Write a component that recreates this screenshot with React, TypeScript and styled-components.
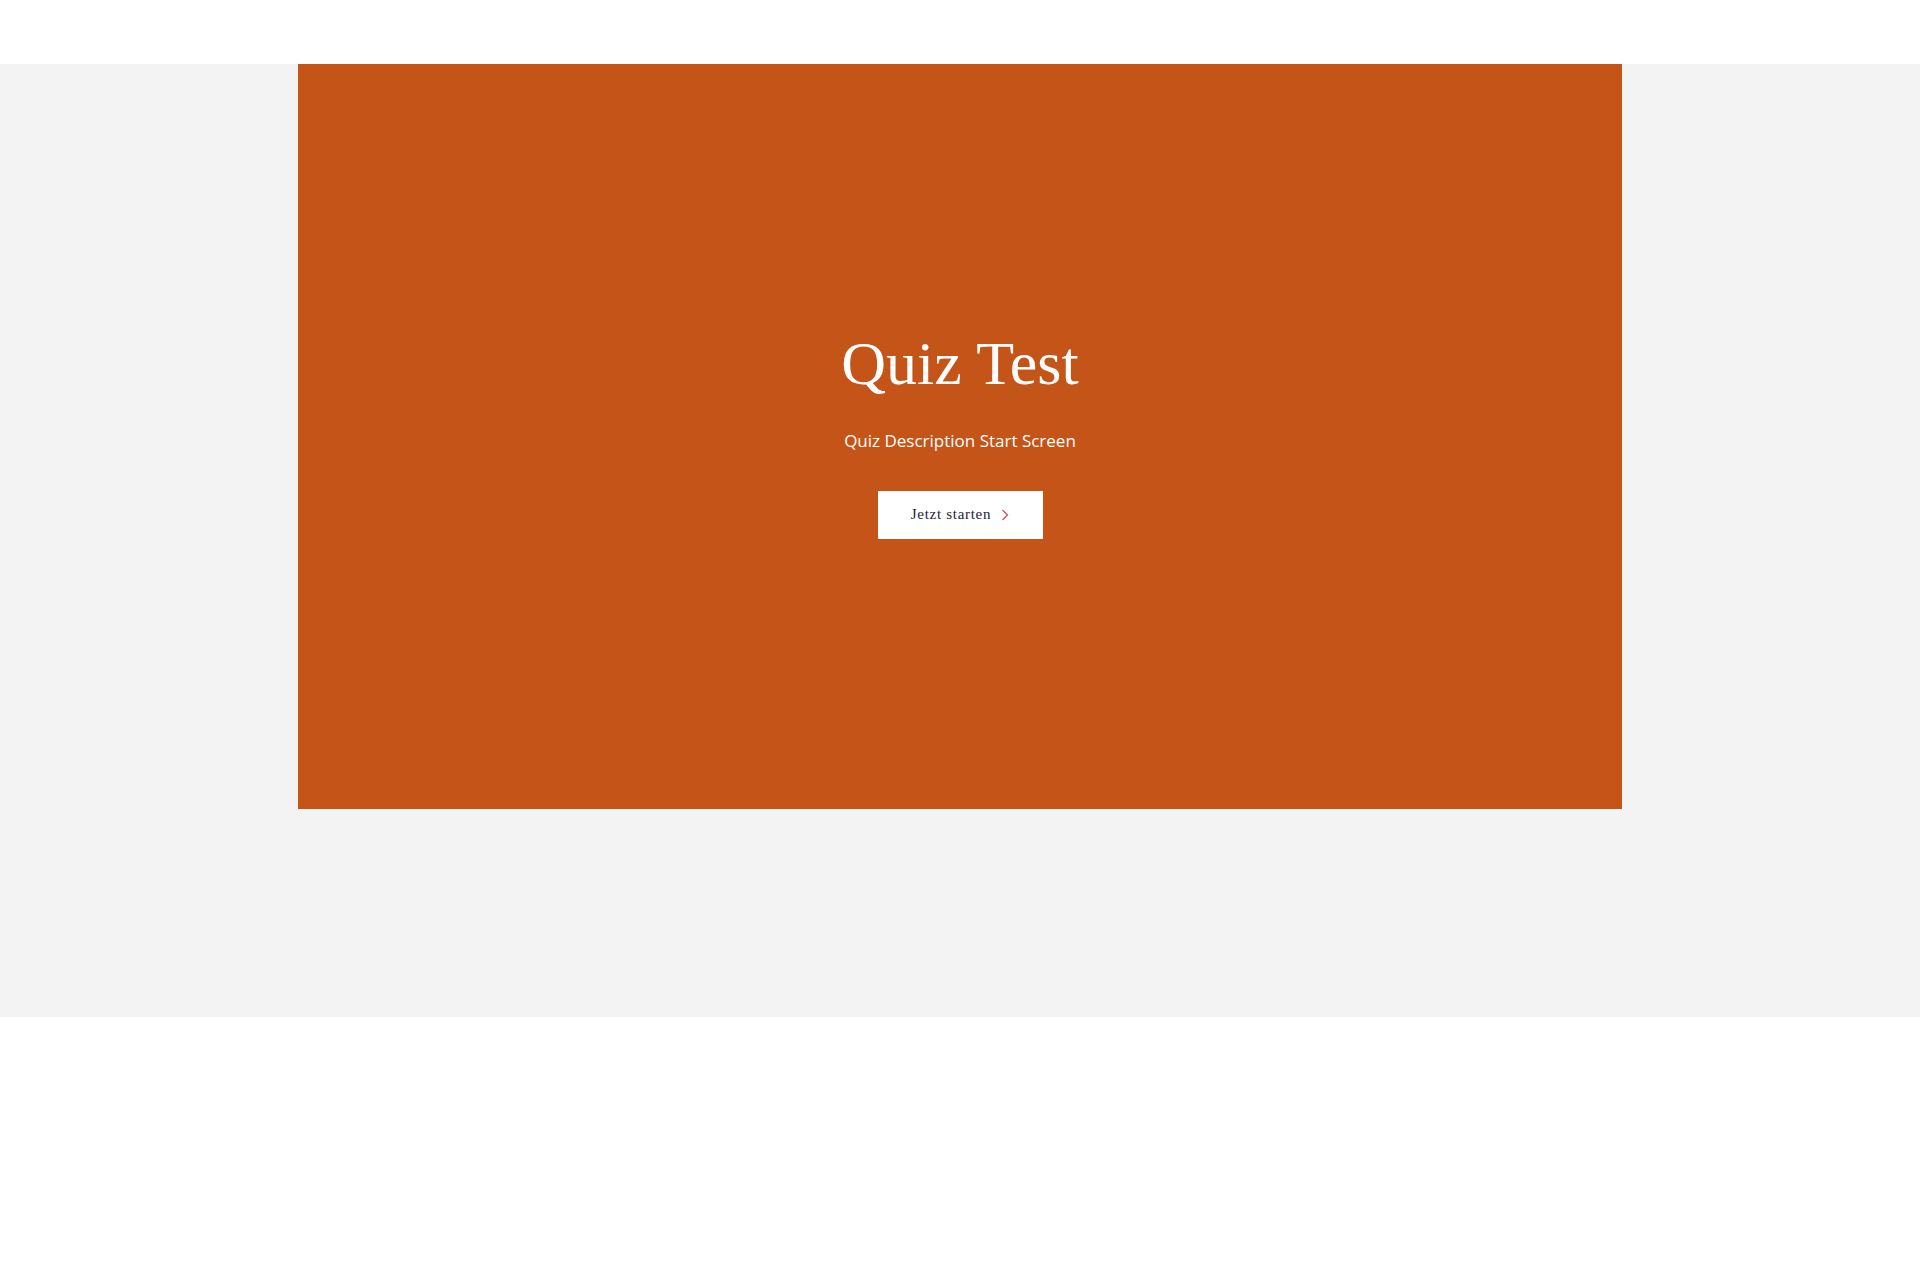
import React from "react";
import styled, { createGlobalStyle } from "styled-components";

const Global = createGlobalStyle`
  html, body { margin: 0; padding: 0; background: #ffffff; }
  body { font-family: "Open Sans", "Liberation Sans", sans-serif; }
`;

const Page = styled.div`
  padding-top: 64px;
  min-height: 1280px;
  box-sizing: border-box;
`;

const Band = styled.section`
  background: #f3f3f3;
  height: 953px;
  display: flex;
  justify-content: center;
  align-items: flex-start;
`;

const Stage = styled.div`
  width: 1324px;
  height: 745px;
  box-sizing: border-box;
  padding-bottom: 8px;
  background: #c45418;
  display: flex;
  flex-direction: column;
  align-items: center;
  justify-content: center;
  color: #ffffff;
`;

const Title = styled.h1`
  margin: 0;
  font-family: "Liberation Serif", "DejaVu Serif", serif;
  font-weight: 400;
  font-size: 62px;
  line-height: 72px;
`;

const Description = styled.p`
  margin: 30px 0 0;
  font-family: "Open Sans", "Noto Sans", sans-serif;
  font-size: 17px;
  line-height: 24px;
`;

const StartButton = styled.button`
  margin-top: 38px;
  width: 165px;
  height: 48px;
  background: #ffffff;
  border: none;
  display: flex;
  align-items: center;
  justify-content: center;
  gap: 10px;
  font-family: "Liberation Serif", "DejaVu Serif", serif;
  font-size: 15px;
  letter-spacing: 0.7px;
  color: #1d2433;
  cursor: pointer;
  padding: 0;
`;

const Chevron = styled.svg`
  width: 8px;
  height: 12px;
  margin-top: 1px;
`;

export default function App() {
  return (
    <>
      <Global />
      <Page>
        <Band>
          <Stage>
            <Title>Quiz Test</Title>
            <Description>Quiz Description Start Screen</Description>
            <StartButton>
              Jetzt starten
              <Chevron viewBox="0 0 8 12">
                <path d="M1.5 1 L6.5 6 L1.5 11" fill="none" stroke="#e0475f" strokeWidth="1.3" />
              </Chevron>
            </StartButton>
          </Stage>
        </Band>
      </Page>
    </>
  );
}
